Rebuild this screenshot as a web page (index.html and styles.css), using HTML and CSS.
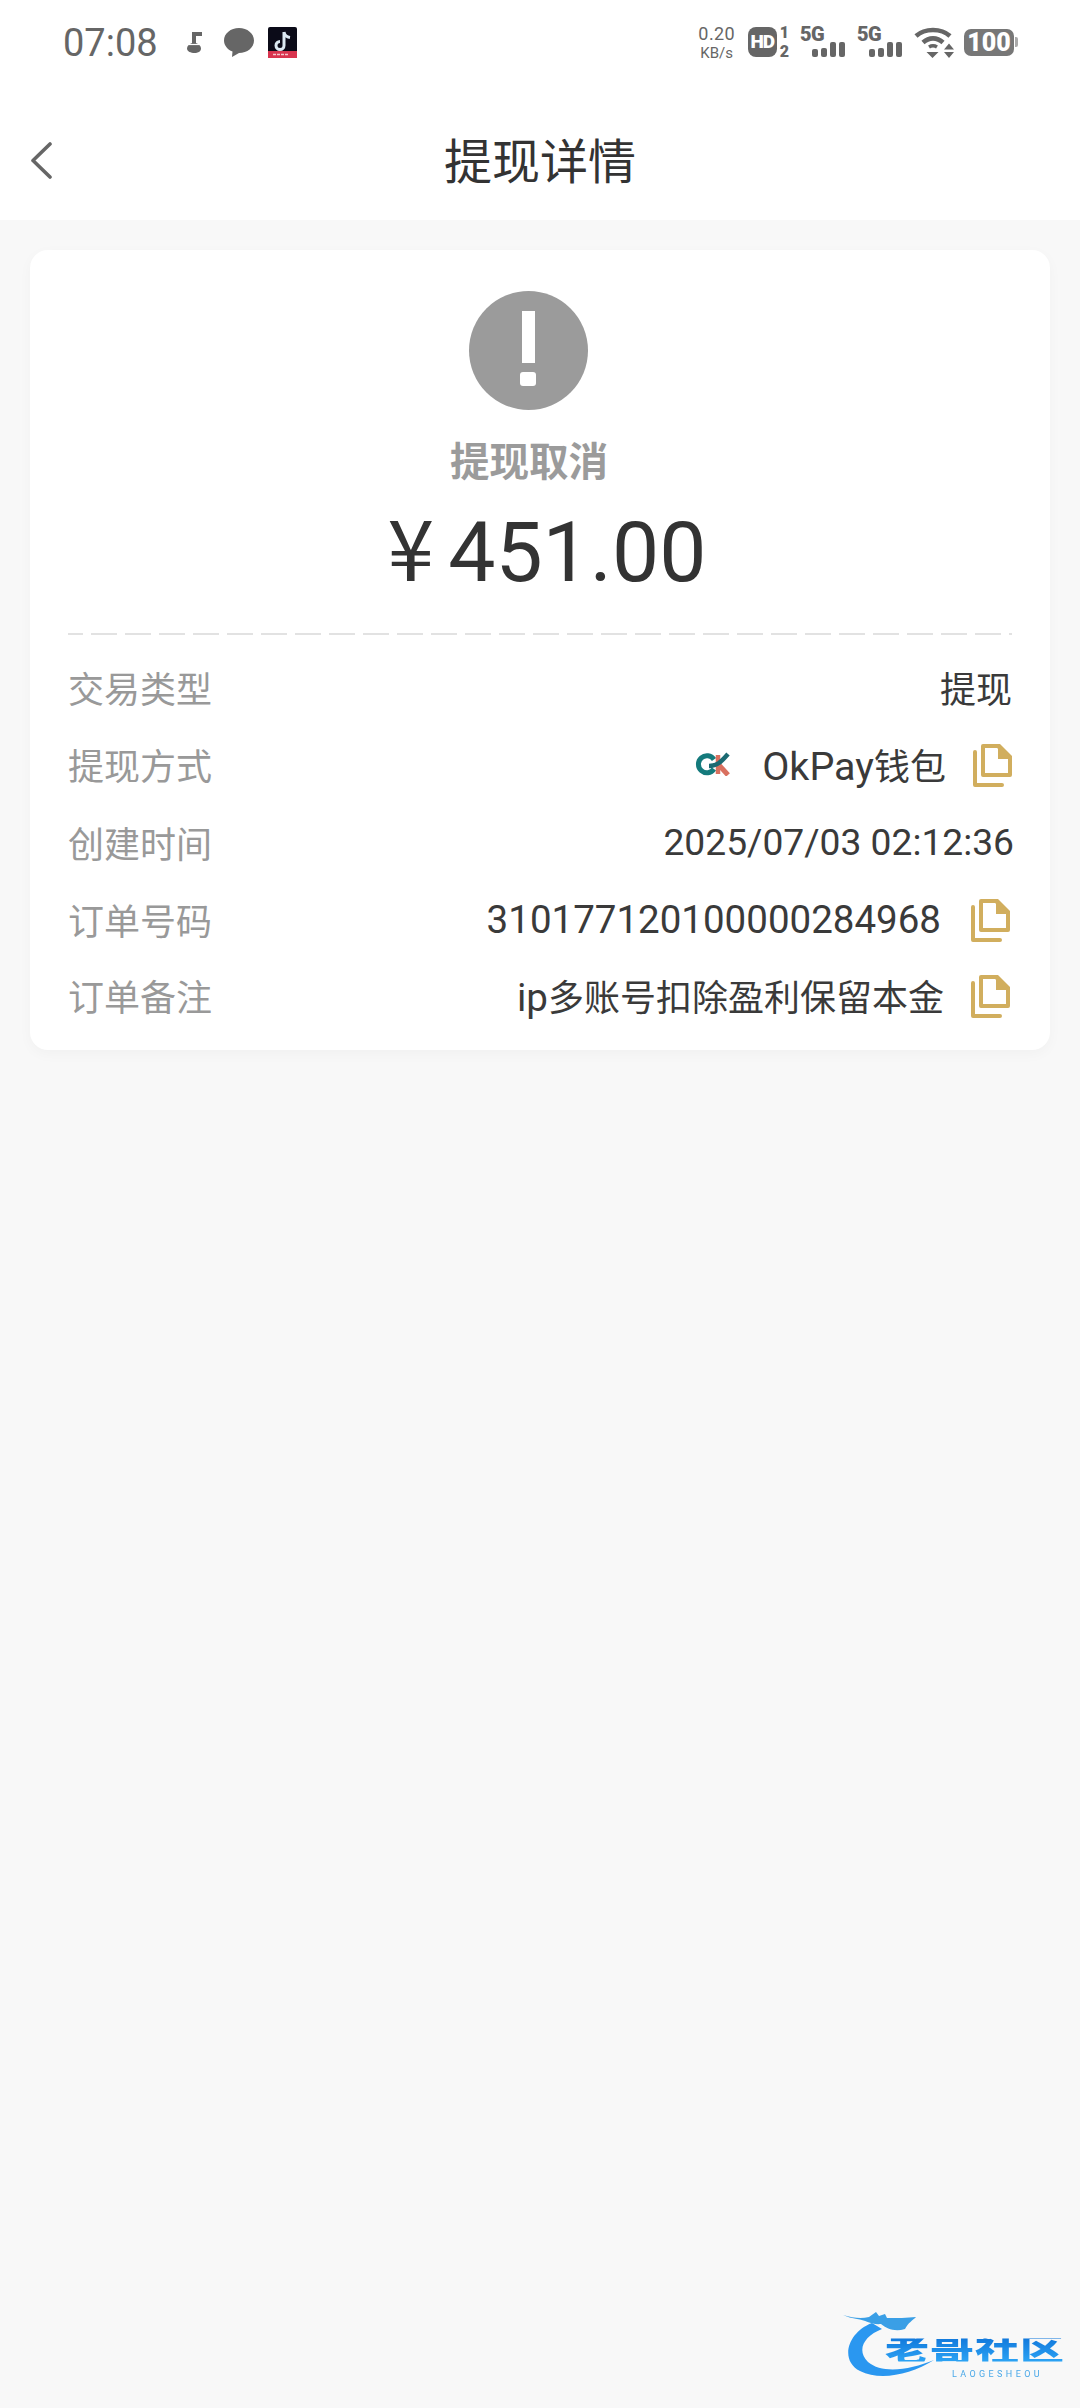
FILE: index.html
```html
<!DOCTYPE html>
<html lang="zh-CN">
<head>
    <meta charset="UTF-8">
    <meta name="viewport" content="width=device-width, initial-scale=1.0">
    <title>提现详情</title>
    <link rel="stylesheet" href="styles.css">
</head>
<body>
    <svg class="defs" width="0" height="0">
        <symbol id="copy" viewBox="0 0 39 43">
            <path d="M10 2H25L37 14V31H10z" fill="none" stroke="#d1ae5e" stroke-width="4" stroke-linejoin="round"/>
            <path d="M25 0h2L39 12v3H25z" fill="#d1ae5e"/>
            <path d="M2 8V41H29" fill="none" stroke="#d1ae5e" stroke-width="4" stroke-linecap="round" stroke-linejoin="round"/>
        </symbol>
    </svg>

    <div class="top">
        <div class="status">
            <div class="status-left">
                <span class="clock">07:08</span>
                <svg class="ic-note" viewBox="0 0 18 21" width="18" height="21">
                    <path d="M7 0h10v4h-6v7c3 1 5 3 5 5.500 0 3-3 4.500-6.500 4.500S2 19.500 2 16.500c0-2.500 2-4.500 5-5.500z" fill="#666"/>
                    <path d="M0 12.500h18" stroke="#fff" stroke-width="1.200"/>
                </svg>
                <svg class="ic-chat" viewBox="0 0 30 29" width="30" height="29">
                    <path d="M15 0c8.300 0 15 5.500 15 12.500S23.300 25 15 25l-7 4 .5-5.500C3.400 21.500 0 17.400 0 12.500 0 5.500 6.700 0 15 0z" fill="#666"/>
                </svg>
                <svg class="ic-tiktok" viewBox="0 0 30 31" width="30" height="31">
                    <rect width="29" height="31" rx="2" fill="#0b0b18"/>
                    <path d="M16 5v13.500a4 4 0 1 1-4-4M16 5c.5 3 2.500 5 6 5.500" fill="none" stroke="#dce9f2" stroke-width="3"/>
                    <rect y="24" width="29" height="7" fill="#d8344e"/>
                    <path d="M5 27.500h15" stroke="#f4c4cc" stroke-width="1.500" stroke-dasharray="3 1"/>
                </svg>
            </div>
            <div class="status-right">
                <div class="speed"><span>0.20</span><span>KB/s</span></div>
                <div class="hd">
                    <span class="hd-box">HD</span>
                    <span class="hd-nums"><span>1</span><span>2</span></span>
                </div>
                <div class="sim"><span class="sim-label">5G</span><span class="bars"><i></i><i></i><i></i><i></i></span></div>
                <div class="sim"><span class="sim-label">5G</span><span class="bars"><i></i><i></i><i></i><i></i></span></div>
                <svg class="ic-wifi" viewBox="0 0 40 31" width="40" height="31">
                    <path d="M2 9C11 1 27 1 36 9M9 15.500C15 10 23 10 29 15.500" fill="none" stroke="#666" stroke-width="4.600"/>
                    <path d="M15 20c2.500-1.500 5.500-1.500 8 0" fill="none" stroke="#666" stroke-width="3.600"/>
                    <path d="M12.500 25h12l-6 6zM30 22.500l5-6 5 6zM30 25h10l-5 6z" fill="#666"/>
                </svg>
                <div class="battery"><span class="battery-body">100</span><span class="battery-tip"></span></div>
            </div>
        </div>
        <div class="nav">
            <svg class="back" viewBox="0 0 22 37" width="22" height="37">
                <path d="M20 2 3 18.500 20 35" fill="none" stroke="#666" stroke-width="3.600" stroke-linecap="round" stroke-linejoin="round"/>
            </svg>
            <h1>提现详情</h1>
        </div>
    </div>

    <div class="card">
        <div class="summary">
            <div class="alert"><span class="alert-bar"></span><span class="alert-dot"></span></div>
            <div class="state">提现取消</div>
            <div class="amount"><span class="yen">¥</span>451.00</div>
        </div>
        <div class="dash"></div>
        <div class="row">
            <span class="label">交易类型</span>
            <span class="value">提现</span>
        </div>
        <div class="row row-pay">
            <span class="label">提现方式</span>
            <span class="value">
                <svg class="ok-logo" viewBox="0 0 36 24" width="36" height="24">
                    <path d="M19 7.500A8.500 8.500 0 1 0 19 17" fill="none" stroke="#147a7c" stroke-width="5"/>
                    <path d="M23 3v19" stroke="#d9705f" stroke-width="4.500"/>
                    <path d="M23 12l10 11" fill="none" stroke="#d9705f" stroke-width="5"/>
                    <path d="M14 14c8 0 12-4 19-12" fill="none" stroke="#1c6a72" stroke-width="4.500"/>
                </svg>
                <span class="txt"><span class="num pay">OkPay</span>钱包</span>
                <svg class="copy"><use href="#copy"/></svg>
            </span>
        </div>
        <div class="row row-time">
            <span class="label">创建时间</span>
            <span class="value date">2025/07/03 02:12:36</span>
        </div>
        <div class="row row-inset">
            <span class="label">订单号码</span>
            <span class="value"><span class="txt num order">310177120100000284968</span><svg class="copy"><use href="#copy"/></svg></span>
        </div>
        <div class="row row-inset">
            <span class="label">订单备注</span>
            <span class="value"><span class="txt"><span class="num">ip</span>多账号扣除盈利保留本金</span><svg class="copy"><use href="#copy"/></svg></span>
        </div>
    </div>

    <div class="watermark">
        <svg class="dragon" viewBox="0 0 100 70" width="100" height="70">
            <path d="M30 11C6 20-3 48 18 59c20 10 50 4 74-11-24 10-52 14-66 2C14 38 22 24 40 17z" fill="#2a97f0"/>
            <path d="M1 3c10 3 18 4 26 2l7-5 3 4 6-2 2 4c10 0 20 0 29-1-3 3-8 6-11 12-10 3-18 0-24-5-10 1-15-4-24-5-5-1-10-2-14-4z" fill="#3a9fe6"/>
        </svg>
        <div class="wm-text">
            <span class="wm-cn">老哥社区</span>
            <span class="wm-en">LAOGESHEOU</span>
        </div>
    </div>
</body>
</html>
```

FILE: styles.css
```css
*{
    margin: 0;
    padding: 0;
    box-sizing: border-box;
}
html,body{
    height: 100%;
}
body{
    position: relative;
    background-color: #f8f8f8;
    font-family: Roboto, "Noto Sans CJK SC", sans-serif;
    color: #333;
    overflow: hidden;
}
.defs{
    position: absolute;
}

/* 顶部 */
.top{
    height: 220px;
    background-color: #fff;
}
.status{
    height: 84px;
    display: flex;
    justify-content: space-between;
    align-items: center;
    padding: 0 62px 0 63px;
    color: #666;
}
.status-left{
    display: flex;
    align-items: center;
}
.clock{
    font-size: 38px;
    margin-right: 27px;
    margin-top: 2px;
}
.ic-note{
    margin-right: 21px;
    margin-top: 1px;
}
.ic-chat{
    margin-right: 14px;
}
.status-right{
    display: flex;
    align-items: center;
}
.speed{
    width: 38px;
    display: flex;
    flex-direction: column;
    align-items: center;
    font-size: 15px;
    line-height: 18px;
    margin-right: 12px;
}
.speed span:first-child{
    font-size: 18px;
    line-height: 21px;
    letter-spacing: .4px;
}
.hd{
    display: flex;
    align-items: center;
    margin-right: 11px;
}
.hd-box{
    width: 29px;
    height: 30px;
    border-radius: 8px;
    background-color: #666;
    color: #fff;
    font-size: 19px;
    font-weight: 900;
    line-height: 30px;
    text-align: center;
    letter-spacing: -1px;
}
.hd-nums{
    display: flex;
    flex-direction: column;
    align-items: center;
    font-size: 16px;
    font-weight: 900;
    line-height: 19px;
    margin-left: 3px;
}
.sim{
    width: 45px;
    display: flex;
    flex-direction: column;
    margin-right: 12px;
}
.sim-label{
    font-size: 20px;
    font-weight: 900;
    line-height: 15px;
    letter-spacing: -.5px;
}
.bars{
    display: flex;
    align-items: flex-end;
    justify-content: flex-end;
    gap: 3px;
    height: 15px;
}
.bars i{
    width: 6px;
    border-radius: 2px;
    background-color: #666;
    height: 8px;
}
.bars i:nth-child(2){
    height: 9px;
}
.bars i:nth-child(3),
.bars i:nth-child(4){
    height: 15px;
}
.ic-wifi{
    margin-right: 10px;
}
.battery{
    display: flex;
    align-items: center;
}
.battery-body{
    width: 50px;
    height: 27px;
    border-radius: 7px;
    background-color: #777;
    color: #fff;
    font-size: 25px;
    font-weight: 900;
    line-height: 27px;
    text-align: center;
}
.battery-tip{
    width: 3px;
    height: 10px;
    margin-left: 1px;
    background-color: #aaa;
    border-radius: 0 2px 2px 0;
}
.nav{
    height: 136px;
    display: flex;
    align-items: center;
    position: relative;
    padding: 16px 0 0 30px;
}
.nav h1{
    position: absolute;
    left: 0;
    right: 0;
    top: 48px;
    text-align: center;
    font-size: 48px;
    line-height: 62px;
    font-weight: 400;
    color: #333;
}

/* 卡片 */
.card{
    margin: 30px 30px 0;
    height: 800px;
    background-color: #fff;
    border-radius: 18px;
    box-shadow: 0 4px 14px rgba(0,0,0,.03);
    padding: 41px 38px 0;
}
.summary{
    display: flex;
    flex-direction: column;
    align-items: center;
}
.alert{
    width: 119px;
    height: 119px;
    border-radius: 50%;
    background-color: #9b9b9b;
    margin-right: 24px;
    display: flex;
    flex-direction: column;
    align-items: center;
    padding-top: 20px;
}
.alert-bar{
    width: 13px;
    height: 52px;
    background-color: #fff;
}
.alert-dot{
    width: 16px;
    height: 14px;
    border-radius: 3px;
    background-color: #fff;
    margin-top: 9px;
}
.state{
    margin-top: 28px;
    margin-right: 22px;
    font-size: 39.500px;
    line-height: 50px;
    font-weight: 700;
    color: #9b9b9b;
}
.amount{
    margin-top: 4px;
    margin-left: 14px;
    font-size: 84px;
    line-height: 106px;
    color: #333;
}
.yen{
    font-family: "Noto Sans CJK SC", sans-serif;
    margin-right: 14px;
}
.dash{
    margin-top: 27px;
    margin-bottom: 14px;
    height: 2px;
    background-image: linear-gradient(to right, #e2e2e2 26px, transparent 26px);
    background-size: 34px 2px;
    background-position: -11px 0;
}
.row{
    height: 76px;
    display: flex;
    justify-content: space-between;
    align-items: center;
    font-size: 36px;
}
.row-pay,
.row-time{
    height: 78px;
}
.label{
    color: #999;
}
.value{
    display: flex;
    align-items: center;
    color: #3a3a3a;
}
.num{
    font-size: 38.500px;
}
.pay{
    font-size: 39.500px;
}
.date{
    font-size: 37.200px;
    margin-right: -2px;
}
.ok-logo{
    margin-right: 31px;
}
.copy{
    width: 39px;
    height: 43px;
    margin-left: 27px;
    margin-top: 2px;
}
.row-inset .value{
    margin-right: 2px;
}
.order + .copy{
    margin-left: 30px;
}

/* 水印 */
.watermark{
    position: absolute;
    right: 15px;
    top: 2312px;
    display: flex;
}
.dragon{
    margin-right: -57px;
    filter: blur(.6px);
}
.wm-text{
    display: flex;
    flex-direction: column;
    padding-top: 22px;
    filter: blur(.6px);
}
.wm-cn{
    font-size: 44px;
    line-height: 32px;
    font-weight: 900;
    letter-spacing: 1px;
    transform: scaleY(.72);
    background-image: linear-gradient(to bottom, #1279dc, #2ca3f4);
    -webkit-background-clip: text;
    background-clip: text;
    color: transparent;
}
.wm-en{
    align-self: flex-end;
    margin-right: 22px;
    margin-top: 2px;
    font-size: 9px;
    line-height: 12px;
    color: #4aa8e8;
    letter-spacing: 3.400px;
}
```
